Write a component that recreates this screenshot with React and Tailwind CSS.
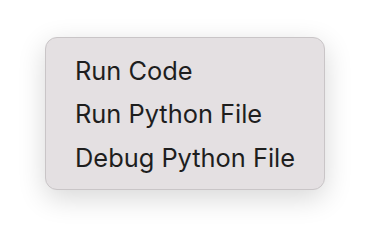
import React from 'react';

const items = ['Run Code', 'Run Python File', 'Debug Python File'];

export default function App() {
  return (
    <div className="w-[370px] h-[244px] bg-white pt-[37px] pl-[45px]">
      <div
        className="w-[280px] h-[153px] rounded-[12px] border border-[#c9c5c7] bg-[#e4e0e2] shadow-[0_8px_28px_rgba(0,0,0,0.16)] py-[11px] pl-[29px]"
        style={{ fontFamily: 'Inter, "Liberation Sans", sans-serif' }}
      >
        {items.map((item) => (
          <div key={item} className="h-[43.5px] flex items-center text-[25.4px] text-[#1e1e1e]">
            {item}
          </div>
        ))}
      </div>
    </div>
  );
}
